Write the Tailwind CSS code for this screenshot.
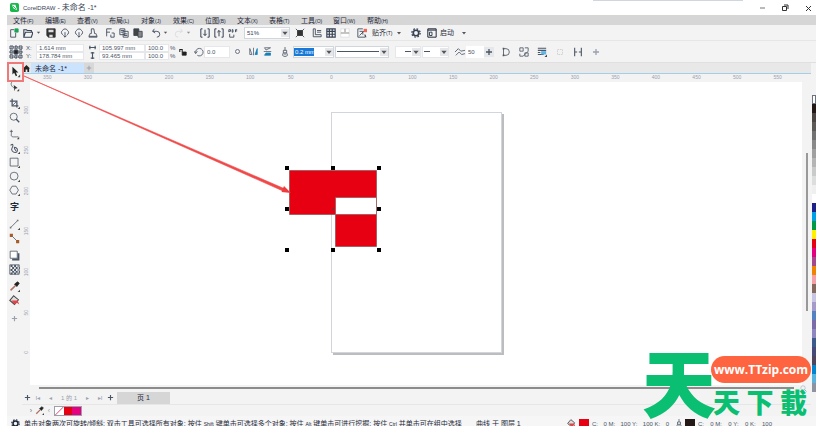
<!DOCTYPE html>
<html lang="zh-CN">
<head>
  <meta charset="UTF-8" />
  <title>CorelDRAW - 未命名 -1*</title>
  <meta name="viewport" content="width=device-width, initial-scale=1.0" />
  <script src="https://cdn.jsdelivr.net/npm/@tailwindcss/browser@4"></script>
</head>
<body class="relative h-screen overflow-hidden bg-white fill-none stroke-current pl-[7px] font-['Liberation_Sans','Noto_Sans_CJK_SC',sans-serif] text-[7px] leading-none text-gray-700">

  <!-- Icon sprite -->
  <svg class="hidden">
    <symbol id="caret" viewBox="0 0 6 6"><path d="M1 2h4L3 4.500z" fill="#555" stroke="none"/></symbol>
    <symbol id="new" viewBox="0 0 12 12"><path d="M6 2H2v9h6V6"/><path d="M7 1h4v4H7z" fill="#19a55a" stroke="#19a55a"/></symbol>
    <symbol id="open" viewBox="0 0 12 12"><path d="M1 11V2h3l1 1h5v2M1 11l2-6h9l-2 6z" stroke-width="1.300"/></symbol>
    <symbol id="save" viewBox="0 0 12 12"><path d="M1 1h10v10H3L1 9z" fill="#333" stroke="#333"/><path d="M3 2h6v3H3zM4 8h4v3H4z" fill="#ddd" stroke="none"/></symbol>
    <symbol id="cloud-up" viewBox="0 0 12 12"><path d="M3.500 8a2.800 2.800 0 0 1-.5-5 3.300 3.300 0 0 1 6 0 2.800 2.800 0 0 1-.5 5M6 11V5M4 9l2 2 2-2"/></symbol>
    <symbol id="print" viewBox="0 0 12 12"><path d="M4 7V1h3l1 6M3 6l-2 4h10L9 6M1 11h10"/></symbol>
    <symbol id="cut" viewBox="0 0 12 12"><path d="M2 10V1h6M2 5h4M8 6h3v5H7V8"/></symbol>
    <symbol id="copy" viewBox="0 0 12 12"><path d="M1 1h6v7H1zM5 4h6v7H5zM2 3h4M2 5h3M6 7h4M6 9h4"/></symbol>
    <symbol id="paste" viewBox="0 0 12 12"><path d="M1 1h6v8H1z" fill="#444"/><path d="M6 4h5v7H6z" fill="#888"/></symbol>
    <symbol id="undo" viewBox="0 0 12 12"><path d="M4 1L2 4l3 2M2 4h5a3 3 0 0 1 0 7"/></symbol>
    <symbol id="redo" viewBox="0 0 12 12"><path d="M8 1l2 3-3 2M10 4H5a3 3 0 0 0 0 7" stroke="#ccc"/></symbol>
    <symbol id="import" viewBox="0 0 12 12"><path d="M3 1H1v10h2M9 1h2v10H9M6 2v7M4 7l2 2 2-2" stroke-width="1.200"/></symbol>
    <symbol id="export" viewBox="0 0 12 12"><path d="M3 1H1v10h2M9 1h2v10H9M6 10V3M4 5l2-2 2 2" stroke-width="1.200"/></symbol>
    <symbol id="pdf" viewBox="0 0 12 12"><path d="M1 5V2h2v2H1M5 2v3h1V2zM9 5V2h2M9 3.500h2M2 7v4h5V8"/></symbol>
    <symbol id="full" viewBox="0 0 12 12"><path d="M3 3h6v6H3z" fill="#333" stroke="#333"/><path d="M1 1l3 3M11 1L8 4M1 11l3-3M11 11L8 8"/></symbol>
    <symbol id="rulers" viewBox="0 0 12 12"><path d="M1.500 1v9.500H11V8H4V1zM6 3h5M6 5h5"/></symbol>
    <symbol id="grid" viewBox="0 0 12 12"><path d="M1 1h10v10H1zM1 4h10M1 7.500h10M4 1v10M7.500 1v10" stroke-width="1.400"/></symbol>
    <symbol id="guides" viewBox="0 0 12 12"><path d="M1 1h10v10H1z" fill="#fff" stroke="#ddd"/><path d="M1 6h10M6 1v4" stroke="#777"/></symbol>
    <symbol id="snap" viewBox="0 0 12 12"><path d="M7 1H1v10h9V8M3 4h4v4M3 9l6-6M9 8l2 3"/><path d="M8 1h4v4H8z" fill="#ee6655" stroke="none"/></symbol>
    <symbol id="gear" viewBox="0 0 12 12"><circle cx="6" cy="6" r="3.300" stroke-width="2"/><circle cx="6" cy="6" r="5" stroke-width="1.500" stroke-dasharray="2 1.930"/></symbol>
    <symbol id="app" viewBox="0 0 12 12"><path d="M1 1h10v10H1zM1 2.500h10" stroke-width="1.200"/><path d="M3 5h3v4H3z"/></symbol>
    <symbol id="origin" viewBox="0 0 14 14"><path d="M2 2h10v10H2z" stroke-dasharray="1 1"/><path d="M1 1h3v3H1zM10 1h3v3h-3zM1 10h3v3H1zM10 10h3v3h-3zM6 1h2v3H6zM6 10h2v3H6zM1 6h3v2H1zM10 6h3v2h-3z"/><path d="M5 5h4v4H5z" fill="#222"/></symbol>
    <symbol id="width" viewBox="0 0 8 8"><path d="M0 4h8M1 2v4M7 2v4" stroke-width="1.300"/></symbol>
    <symbol id="height" viewBox="0 0 8 8"><path d="M4 0v8M2 1h4M2 7h4" stroke-width="1.300"/></symbol>
    <symbol id="lock" viewBox="0 0 10 10"><path d="M4 5h5v4H4z" fill="#222" stroke="#222"/><path d="M1 5V2h3v3" stroke="#222" stroke-width="1.300"/></symbol>
    <symbol id="rotate" viewBox="0 0 12 12"><path d="M2 7a4.500 4.500 0 1 1 2 3M0 5l2 3 2-3"/></symbol>
    <symbol id="flip-h" viewBox="0 0 12 12"><path d="M1 2v8h3zM6 1v10"/><path d="M11 2v8H8z" fill="#1581b8" stroke="#1581b8"/></symbol>
    <symbol id="flip-v" viewBox="0 0 12 12"><path d="M2 1h8L4 4zM1 6h10"/><path d="M4 8h6v3H2z" fill="#1581b8" stroke="#1581b8"/></symbol>
    <symbol id="pen" viewBox="0 0 8 12"><path d="M4 0v4M2 4h4v3H2zM2 7l-1 3 3 2 3-2-1-3M4 7v3"/></symbol>
    <symbol id="smooth" viewBox="0 0 12 12"><path d="M0 6l4-4 3 3 5-1M1 10l4-4 3 3 4-1"/></symbol>
    <symbol id="close-curve" viewBox="0 0 12 12"><path d="M3 2v8M3 2h3a4 4 0 0 1 0 8H3"/><path d="M2 1h2v2H2zM2 9h2v2H2z" fill="#555" stroke="none"/></symbol>
    <symbol id="bounds" viewBox="0 0 12 12"><path d="M1 1h4v4H1zM7 7h4v4H7zM7 1h4v4L5 11H1V8"/></symbol>
    <symbol id="wrap" viewBox="0 0 12 12"><path d="M1 1.500h10M1 4h10M1 6.500h3M1 9h7" stroke-width="1.300"/><path d="M5 5h6v4H5z" fill="#5ab5e8" stroke="none"/><path d="M12 9v3H9z" fill="#444" stroke="none"/></symbol>
    <symbol id="dim" viewBox="0 0 12 12"><path d="M3 3h6v6H3z" stroke="#ccc" stroke-dasharray="2 1"/></symbol>
    <symbol id="nodes" viewBox="0 0 12 12"><path d="M2 1v10M10 1v10M2 6h3M10 6H7" stroke-width="1.300"/></symbol>
    <symbol id="plus" viewBox="0 0 8 8"><path d="M4 1v6M1 4h6" stroke-width="1.300"/></symbol>
    <symbol id="home" viewBox="0 0 8 8"><path d="M4 0l4 4H7v4H5V5H3v3H1V4H0z" fill="#222" stroke="none"/></symbol>
    <!-- toolbox -->
    <symbol id="pick" viewBox="0 0 14 14"><path d="M4 1v9l2-2 2 4 1.500-1L8 7.500h3z" fill="#222" stroke="none"/><path d="M13 10v3h-3z" fill="#444" stroke="none"/></symbol>
    <symbol id="shape" viewBox="0 0 14 14"><path d="M4 1c-3 3 0 7 3 8"/><path d="M6 5l5 4-3 1-1 3z" fill="#333" stroke="none"/><path d="M13 10v3h-3z" fill="#444" stroke="none"/></symbol>
    <symbol id="crop" viewBox="0 0 14 14"><path d="M4 1v9h8M1 4h9v8" stroke-width="1.600"/><path d="M5 9l4-4"/><path d="M14 11v3h-3z" fill="#444" stroke="none"/></symbol>
    <symbol id="zoom" viewBox="0 0 14 14"><circle cx="6" cy="6" r="4.500"/><path d="M9 9l4 4" stroke-width="1.700"/></symbol>
    <symbol id="freehand" viewBox="0 0 14 14"><path d="M3 1v5M1 3h4M3 6c-1 5 2 4 9 4"/><path d="M13 10v3h-3z" fill="#444" stroke="none"/></symbol>
    <symbol id="curve" viewBox="0 0 14 14"><path d="M2 3c3-3 4 0 2 3s1 6 4 6 4-4 1-6-3 1 0 4" stroke-width="1.300"/><path d="M14 11v3h-3z" fill="#444" stroke="none"/></symbol>
    <symbol id="rect" viewBox="0 0 14 14"><path d="M1.500 1.500h10v10h-10z"/><path d="M14 11v3h-3z" fill="#444" stroke="none"/></symbol>
    <symbol id="ellipse" viewBox="0 0 14 14"><circle cx="6.500" cy="6.500" r="5"/><path d="M14 11v3h-3z" fill="#444" stroke="none"/></symbol>
    <symbol id="polygon" viewBox="0 0 14 14"><path d="M4 1.500h5l3 5-3 5H4l-3-5z"/><path d="M14 11v3h-3z" fill="#444" stroke="none"/></symbol>
    <symbol id="line" viewBox="0 0 14 14"><path d="M2 11l9-9"/><path d="M1 10h2v2H1zM10 1h2v2h-2z" fill="#777" stroke="none"/><path d="M14 11v3h-3z" fill="#444" stroke="none"/></symbol>
    <symbol id="connector" viewBox="0 0 14 14"><path d="M3 3l8 8"/><path d="M1 1h4v4H1zM9 9h4v4H9z" fill="#a85a28" stroke="none"/></symbol>
    <symbol id="shadow" viewBox="0 0 14 14"><path d="M4 12h8V4" stroke-width="2.500"/><path d="M1.500 1.500h9v9h-9z" fill="#fff"/></symbol>
    <symbol id="checker" viewBox="0 0 14 14"><path d="M1 1h12v12H1z"/><path d="M2 2.500h10M2 7.500h10M2 12h10" stroke-width="2.500" stroke-dasharray="2.500 2"/><path d="M4 5h10M4 10h10" stroke-width="2.500" stroke-dasharray="2.500 2"/></symbol>
    <symbol id="dropper" viewBox="0 0 14 14"><path d="M2 12l6-6" stroke="#b07060" stroke-width="2"/><path d="M7 4l3 3 3-4-2-2z" fill="#222" stroke="#222"/><path d="M14 11v3h-3z" fill="#444" stroke="none"/></symbol>
    <symbol id="bucket" viewBox="0 0 14 14"><path d="M6 1l6 5-5 6-6-5z" fill="#ddd" stroke="#444" stroke-width="1.300"/><path d="M3 7h8l2 5-3-2-3 2z" fill="#e0454a" stroke="none"/></symbol>
  </svg>

  <!-- Title bar -->
  <header class="relative flex h-[15px] items-center bg-white pr-[3px] pl-[3px]">
    <svg class="size-[9px] stroke-none" viewBox="0 0 10 10"><rect width="10" height="10" rx="2" fill="#19b84c"/><path d="M2 2l4 0 2 6-4-2z" fill="#fff"/><path d="M3 3l4 4" stroke="#19b84c"/></svg>
    <h1 class="ml-1 text-[7px]"><span class="text-[6px]">CorelDRAW</span> - <span class="text-[8px]">未命名</span> -1*</h1>
    <div class="ml-auto flex gap-[13px] text-gray-800">
      <button aria-label="最小化"><svg class="size-[10px]" viewBox="0 0 10 10"><path d="M3 5h5" stroke="#777"/></svg></button>
      <button aria-label="还原"><svg class="size-[10px]" viewBox="0 0 10 10"><path d="M2.500 3.500h4v4h-4zM4 2h4v4" stroke="#333"/></svg></button>
      <button aria-label="关闭"><svg class="size-[10px]" viewBox="0 0 10 10"><path d="M3 3l5 5M8 3L3 8" stroke="#333"/></svg></button>
    </div>
    <div class="absolute top-0 right-[73px] h-px w-[150px] bg-gray-300"></div>
  </header>

  <!-- Menu bar -->
  <nav class="flex h-[10px] items-center bg-[#d6d6d6] pl-[6px] text-gray-800">
    <button class="w-8 text-left">文件<span class="text-[5px]">(F)</span></button>
    <button class="w-8 text-left">编辑<span class="text-[5px]">(E)</span></button>
    <button class="w-8 text-left">查看<span class="text-[5px]">(V)</span></button>
    <button class="w-8 text-left">布局<span class="text-[5px]">(L)</span></button>
    <button class="w-8 text-left">对象<span class="text-[5px]">(J)</span></button>
    <button class="w-8 text-left">效果<span class="text-[5px]">(C)</span></button>
    <button class="w-8 text-left">位图<span class="text-[5px]">(B)</span></button>
    <button class="w-8 text-left">文本<span class="text-[5px]">(X)</span></button>
    <button class="w-8 text-left">表格<span class="text-[5px]">(T)</span></button>
    <button class="w-8 text-left">工具<span class="text-[5px]">(O)</span></button>
    <button class="w-[34px] text-left">窗口<span class="text-[5px]">(W)</span></button>
    <button class="w-8 text-left">帮助<span class="text-[5px]">(H)</span></button>
  </nav>

  <!-- Standard toolbar -->
  <div class="flex h-4 items-center gap-[3px] border-b border-[#e6e6e6] bg-[#f3f3f3]">
    <div class="flex items-center">
      <button class="flex w-[14px] justify-center" aria-label="新建"><svg class="size-[10px]"><use href="#new"/></svg></button>
      <button class="flex w-[23px] items-center gap-[3px] pl-[2px]" aria-label="打开"><svg class="size-[10px]"><use href="#open"/></svg><svg class="size-[5px]"><use href="#caret"/></svg></button>
      <button class="flex w-[14px] justify-center" aria-label="保存"><svg class="size-[10px]"><use href="#save"/></svg></button>
      <button class="flex w-[14px] justify-center" aria-label="从云打开"><svg class="size-[10px]"><use href="#cloud-up"/></svg></button>
      <button class="flex w-[14px] justify-center" aria-label="保存到云"><svg class="size-[10px]"><use href="#cloud-up"/></svg></button>
      <button class="flex w-[14px] justify-center" aria-label="打印"><svg class="size-[10px]"><use href="#print"/></svg></button>
    </div>
    <div class="flex items-center">
      <button class="flex w-[14px] justify-center" aria-label="剪切"><svg class="size-[10px]"><use href="#cut"/></svg></button>
      <button class="flex w-[14px] justify-center" aria-label="复制"><svg class="size-[10px]"><use href="#copy"/></svg></button>
      <button class="flex w-[14px] justify-center" aria-label="粘贴"><svg class="size-[10px]"><use href="#paste"/></svg></button>
    </div>
    <div class="flex items-center pl-px">
      <button class="flex w-[23px] items-center gap-[2px] pl-[2px]" aria-label="撤销"><svg class="size-[10px]"><use href="#undo"/></svg><svg class="size-[5px]"><use href="#caret"/></svg></button>
      <button class="flex w-[23px] items-center gap-[2px] pl-[2px] opacity-60" aria-label="重做"><svg class="size-[10px]"><use href="#redo"/></svg><svg class="size-[5px]"><use href="#caret"/></svg></button>
    </div>
    <div class="flex items-center">
      <button class="flex w-[14px] justify-center" aria-label="导入"><svg class="size-[10px]"><use href="#import"/></svg></button>
      <button class="flex w-[14px] justify-center" aria-label="导出"><svg class="size-[10px]"><use href="#export"/></svg></button>
      <button class="flex w-[14px] justify-center" aria-label="发布为 PDF"><svg class="size-[10px]"><use href="#pdf"/></svg></button>
    </div>
    <div class="relative ml-px flex items-center">
      <select class="h-3 w-[46px] appearance-none border border-gray-300 bg-white pl-[2px] text-[6px]" aria-label="缩放级别"><option>51%</option></select>
      <svg class="absolute right-px size-[8px] bg-gray-200"><use href="#caret"/></svg>
    </div>
    <button class="flex w-[14px] justify-center" aria-label="全屏预览"><svg class="size-[10px]"><use href="#full"/></svg></button>
    <div class="flex items-center">
      <button class="flex w-[14px] justify-center" aria-label="标尺"><svg class="size-[10px]"><use href="#rulers"/></svg></button>
      <button class="flex w-[14px] justify-center" aria-label="网格"><svg class="size-[10px]"><use href="#grid"/></svg></button>
      <button class="flex w-[14px] justify-center" aria-label="辅助线"><svg class="size-[10px]"><use href="#guides"/></svg></button>
    </div>
    <button class="flex w-[14px] justify-center" aria-label="贴齐关闭"><svg class="size-[10px]"><use href="#snap"/></svg></button>
    <button class="flex w-[34px] items-center gap-1 text-gray-800"><span>贴齐<span class="text-[5px]">(T)</span></span><svg class="size-[6px]"><use href="#caret"/></svg></button>
    <button class="flex w-[14px] justify-center" aria-label="选项"><svg class="size-[10px]"><use href="#gear"/></svg></button>
    <button class="flex items-center gap-[3px] pl-px text-gray-800"><svg class="size-[10px]"><use href="#app"/></svg>启动<svg class="ml-1 size-[6px]"><use href="#caret"/></svg></button>
  </div>

  <!-- Property bar -->
  <div class="flex h-[22px] items-center border-b border-[#e0e0e0] bg-[#f3f3f3] text-[6px] text-gray-600">
    <button class="ml-[2px]" aria-label="对象原点"><svg class="size-[14px]"><use href="#origin"/></svg></button>
    <div class="ml-[3px] grid grid-cols-[10px_48px] items-center">
      <label for="posX">X:</label><input id="posX" value="1.614 mm" class="h-[8px] border border-gray-200 bg-white pl-[2px]" />
      <label for="posY">Y:</label><input id="posY" value="178.784 mm" class="h-[8px] border border-gray-200 bg-white pl-[2px]" />
    </div>
    <div class="ml-[5px] grid grid-cols-[10px_46px_24px_8px] items-center">
      <label for="objW"><svg class="size-[7px]"><use href="#width"/></svg></label><input id="objW" value="105.997 mm" class="h-[8px] border border-gray-200 bg-white pl-[2px]" />
      <input id="scaleX" aria-label="水平缩放" value="100.0" class="h-[8px] border border-gray-200 bg-white pl-[2px]" /><label for="scaleX" class="pl-px">%</label>
      <label for="objH"><svg class="size-[7px]"><use href="#height"/></svg></label><input id="objH" value="93.465 mm" class="h-[8px] border border-gray-200 bg-white pl-[2px]" />
      <input id="scaleY" aria-label="垂直缩放" value="100.0" class="h-[8px] border border-gray-200 bg-white pl-[2px]" /><label for="scaleY" class="pl-px">%</label>
    </div>
    <button class="ml-[2px]" aria-label="锁定比率"><svg class="size-[8px]"><use href="#lock"/></svg></button>
    <label for="angle" class="ml-[7px]"><svg class="size-[10px]"><use href="#rotate"/></svg></label>
    <input id="angle" aria-label="旋转角度" value="0.0" class="h-3 w-[26px] border border-gray-200 bg-white pl-[2px]" />
    <span class="ml-[5px] size-[5px] rounded-full border border-gray-500"></span>
    <button class="ml-[9px]" aria-label="水平镜像"><svg class="size-[9px]"><use href="#flip-h"/></svg></button>
    <button class="ml-[5px]" aria-label="垂直镜像"><svg class="size-[9px]"><use href="#flip-v"/></svg></button>
    <svg class="ml-[9px] h-[10px] w-[8px]"><use href="#pen"/></svg>
    <div class="relative ml-1 flex items-center">
      <select class="h-3 w-[41px] appearance-none border border-gray-300 bg-white bg-linear-to-r from-[#1a78d6] from-50% to-white to-50% bg-[length:40px_8px] bg-left bg-no-repeat pl-px text-white" aria-label="轮廓宽度"><option>0.2 mm</option></select>
      <svg class="absolute right-px size-[8px] bg-gray-200"><use href="#caret"/></svg>
    </div>
    <div class="relative ml-px flex items-center">
      <select class="h-3 w-[54px] appearance-none border border-gray-300 bg-white" aria-label="线条样式"></select>
      <span class="absolute left-[2px] h-px w-[42px] bg-gray-600"></span>
      <svg class="absolute right-px size-[8px] bg-gray-200"><use href="#caret"/></svg>
    </div>
    <div class="relative ml-[6px] flex items-center">
      <select class="h-3 w-[26px] appearance-none border border-gray-200 bg-white" aria-label="起始箭头"></select>
      <span class="absolute left-[10px] h-px w-[6px] bg-gray-600"></span>
      <svg class="absolute right-px size-[8px] bg-gray-200"><use href="#caret"/></svg>
    </div>
    <div class="relative ml-px flex items-center">
      <select class="h-3 w-[27px] appearance-none border border-gray-200 bg-white" aria-label="终止箭头"></select>
      <span class="absolute left-[2px] h-px w-[6px] bg-gray-600"></span>
      <svg class="absolute right-px size-[8px] bg-gray-200"><use href="#caret"/></svg>
    </div>
    <label for="smoothing" class="ml-[6px]"><svg class="size-[10px]"><use href="#smooth"/></svg></label>
    <input id="smoothing" aria-label="手绘平滑" value="50" class="ml-px h-3 w-[18px] bg-white pl-[2px]" />
    <button class="bg-gray-200 p-px" aria-label="增加"><svg class="size-[8px]"><use href="#plus"/></svg></button>
    <div class="ml-[7px] flex items-center gap-2">
      <button aria-label="闭合曲线"><svg class="size-[10px]"><use href="#close-curve"/></svg></button>
      <button aria-label="边界框"><svg class="size-[10px]"><use href="#bounds"/></svg></button>
      <button aria-label="文本换行"><svg class="size-[10px]"><use href="#wrap"/></svg></button>
      <button aria-label="对齐"><svg class="size-[10px]"><use href="#dim"/></svg></button>
      <button aria-label="节点"><svg class="size-[10px]"><use href="#nodes"/></svg></button>
      <button class="pl-px text-gray-400" aria-label="自定义"><svg class="size-[8px]"><use href="#plus"/></svg></button>
    </div>
  </div>

  <div class="flex h-[353px] bg-[#f3f3f3]">
    <!-- Toolbox -->
    <aside class="relative flex w-[15px] flex-col items-center gap-[3px] pt-[3px] text-gray-600">
      <button class="flex size-[12px] items-center justify-center" aria-label="选择"><svg class="size-[12px]"><use href="#pick"/></svg></button>
      <button aria-label="形状"><svg class="size-[11px]"><use href="#shape"/></svg></button>
      <button class="mt-[3px]" aria-label="裁剪"><svg class="size-[11px]"><use href="#crop"/></svg></button>
      <button aria-label="缩放"><svg class="size-[11px]"><use href="#zoom"/></svg></button>
      <button class="mt-[3px]" aria-label="手绘"><svg class="size-[11px]"><use href="#freehand"/></svg></button>
      <button aria-label="艺术笔"><svg class="size-[11px]"><use href="#curve"/></svg></button>
      <button aria-label="矩形"><svg class="size-[11px]"><use href="#rect"/></svg></button>
      <button aria-label="椭圆"><svg class="size-[11px]"><use href="#ellipse"/></svg></button>
      <button aria-label="多边形"><svg class="size-[11px]"><use href="#polygon"/></svg></button>
      <button class="mt-[3px] h-[11px] text-[9px] leading-[11px] font-bold text-gray-800">字</button>
      <button class="mt-[3px]" aria-label="线段"><svg class="size-[11px]"><use href="#line"/></svg></button>
      <button aria-label="连接器"><svg class="size-[11px]"><use href="#connector"/></svg></button>
      <button class="mt-[3px]" aria-label="阴影"><svg class="size-[11px]"><use href="#shadow"/></svg></button>
      <button aria-label="透明度"><svg class="size-[11px]"><use href="#checker"/></svg></button>
      <button class="mt-[3px]" aria-label="颜色滴管"><svg class="size-[11px]"><use href="#dropper"/></svg></button>
      <button aria-label="交互式填充"><svg class="size-[11px]"><use href="#bucket"/></svg></button>
      <button class="mt-[6px] text-gray-400" aria-label="自定义工具箱"><svg class="size-[7px]"><use href="#plus"/></svg></button>
      <span class="absolute -top-px left-0 h-[20px] w-[17px] border-2 border-[#ef7878]"></span>
    </aside>

    <div class="flex min-w-0 flex-1 flex-col">
      <!-- Document tabs -->
      <div class="flex h-[11px] items-center border-b border-[#a5cfe6] bg-[#e8e8e8]">
        <button class="flex w-[9px] justify-center" aria-label="欢迎屏幕"><svg class="size-[7px]"><use href="#home"/></svg></button>
        <button class="h-full w-[53px] bg-[#cbe3fd] pl-1 text-left text-gray-800">未命名 -1*</button>
        <button class="flex h-full w-[10px] items-center justify-center bg-[#d8d8d8] text-gray-400" aria-label="新建文档"><svg class="size-[6px]"><use href="#plus"/></svg></button>
      </div>

      <!-- Horizontal ruler -->
      <div class="flex h-[8px] pr-[13px] pl-[5px] text-center text-[5px] leading-[7px] text-gray-400">
        <span class="flex-1">350</span><span class="flex-1">300</span><span class="flex-1">250</span><span class="flex-1">200</span><span class="flex-1">150</span><span class="flex-1">100</span><span class="flex-1">50</span><span class="flex-1">0</span><span class="flex-1">50</span><span class="flex-1">100</span><span class="flex-1">150</span><span class="flex-1">200</span><span class="flex-1">250</span><span class="flex-1">300</span><span class="flex-1">350</span><span class="flex-1">400</span><span class="flex-1">450</span><span class="flex-1">500</span><span class="flex-1">550</span>
      </div>

      <div class="flex min-h-0 flex-1">
        <!-- Vertical ruler -->
        <div class="flex w-[8px] flex-col pt-2 pb-3 text-[5px] text-gray-400">
          <span class="flex flex-1 items-center justify-center [writing-mode:sideways-lr]">300</span><span class="flex flex-1 items-center justify-center [writing-mode:sideways-lr]">250</span><span class="flex flex-1 items-center justify-center [writing-mode:sideways-lr]">200</span><span class="flex flex-1 items-center justify-center [writing-mode:sideways-lr]">150</span><span class="flex flex-1 items-center justify-center [writing-mode:sideways-lr]">100</span><span class="flex flex-1 items-center justify-center [writing-mode:sideways-lr]">50</span><span class="flex flex-1 items-center justify-center [writing-mode:sideways-lr]">0</span>
        </div>

        <!-- Drawing canvas -->
        <main class="relative flex-1 overflow-hidden bg-white">
          <div class="absolute top-[30px] left-[301px] h-[241px] w-[171px] border border-gray-300 shadow-[2px_2px_0_#bdbdbd]"></div>
          <svg class="absolute top-[83px] left-[254px] h-[90px] w-[98px] stroke-none" viewBox="284 165 98 90">
            <path d="M289.500 170.500h87v76h-41v-32h-46z" fill="#e60012" stroke="#8c5050" stroke-width=".7"/>
            <path d="M335.500 197.500h41v17h-41z" fill="#fff" stroke="#8c5050" stroke-width=".7"/>
            <g fill="#000">
              <path d="M285 166h4v4h-4zM331 166h4v4h-4zM377 166h4v4h-4z"/>
              <path d="M285 207h4v4h-4zM377 207h4v4h-4z"/>
              <path d="M285 248h4v4h-4zM331 248h4v4h-4zM377 248h4v4h-4z"/>
            </g>
            <path d="M332 208l2 2M334 208l-2 2" stroke="#444" stroke-width=".6"/>
          </svg>
        </main>

        <!-- Vertical scrollbar -->
        <div class="w-[9px] pt-[71px] pl-[4px]"><div class="h-[158px] w-[2px] bg-[#999]"></div></div>
      </div>

      <!-- Horizontal scrollbar -->
      <div class="flex h-[6px] items-center pr-[4px] pl-[17px]">
        <div class="h-[2px] flex-1 bg-[#8c8c8c]"></div>
        <svg class="ml-[6px] size-[7px] text-gray-400"><use href="#zoom"/></svg>
      </div>

      <!-- Page tabs -->
      <div class="flex h-[14px] items-center border-b border-[#e6e6e6] pl-[2px] text-gray-600">
        <button aria-label="添加页"><svg class="size-[7px]"><use href="#plus"/></svg></button>
        <div class="flex w-[76px] items-center justify-around text-[6px] text-gray-400">
          <button>I◂</button><button>◂</button><span>1 的 1</span><button>▸</button><button>▸I</button>
        </div>
        <button aria-label="在后面添加页"><svg class="size-[7px]"><use href="#plus"/></svg></button>
        <button class="ml-[3px] h-3 w-[53px] bg-[#d6d6d6] text-gray-800">页 1</button>
      </div>

      <!-- Document palette -->
      <div class="flex h-[11px] items-center pl-[5px] text-gray-500">
        <button class="w-[8px]">›</button>
        <button aria-label="滴管"><svg class="size-[9px]"><use href="#dropper"/></svg></button>
        <button class="w-[10px] text-gray-400">‹</button>
        <div class="flex h-[10px] w-[28px] border border-gray-400">
          <button class="flex-1 bg-white" aria-label="无填充"><svg class="size-full" viewBox="0 0 8 8"><path d="M0 8L8 0" stroke="#e05060"/></svg></button>
          <button class="flex-1 bg-[#e60012]" aria-label="红"></button>
          <button class="flex-1 bg-[#e4007f]" aria-label="品红"></button>
        </div>
      </div>
    </div>

    <!-- Colour palette -->
    <aside class="flex w-[5px] flex-col pt-[32px] pl-px">
      <span class="h-[9px] border border-gray-500 bg-white"></span>
      <span class="h-[9px] bg-[#231815]"></span><span class="h-[9px] bg-[#4a4442]"></span><span class="h-[9px] bg-[#5d5957]"></span><span class="h-[9px] bg-[#727171]"></span><span class="h-[9px] bg-[#898989]"></span><span class="h-[9px] bg-[#9fa0a0]"></span><span class="h-[9px] bg-[#b5b5b6]"></span><span class="h-[9px] bg-[#c9caca]"></span><span class="h-[9px] bg-[#dcdddd]"></span><span class="h-[9px] bg-[#efefef]"></span><span class="h-[9px] bg-white"></span>
      <span class="h-[9px] bg-[#1d2088]"></span><span class="h-[9px] bg-[#00a0e9]"></span><span class="h-[9px] bg-[#009944]"></span><span class="h-[9px] bg-[#fff100]"></span><span class="h-[9px] bg-[#e60012]"></span><span class="h-[9px] bg-[#e4007f]"></span><span class="h-[9px] bg-[#a3488c]"></span><span class="h-[9px] bg-[#f08300]"></span><span class="h-[9px] bg-[#f5a0a8]"></span><span class="h-[9px] bg-[#84695c]"></span><span class="h-[9px] bg-[#c7c5e3]"></span><span class="h-[9px] bg-[#a59aca]"></span><span class="h-[9px] bg-[#5383c3]"></span><span class="h-[9px] bg-[#7b6bab]"></span><span class="h-[9px] bg-[#8e86c0]"></span><span class="h-[9px] bg-[#3d5a8c]"></span><span class="h-[9px] bg-[#454a78]"></span><span class="h-[9px] bg-[#4f455c]"></span><span class="h-[9px] bg-[#0086d1]"></span><span class="h-[9px] bg-[#55b5e0]"></span><span class="h-[9px] bg-[#8d93a0]"></span>
    </aside>
  </div>

  <!-- Status bar -->
  <footer class="flex h-[12px] items-center bg-[#f6f6f6] pt-[3px] pl-1 whitespace-nowrap text-gray-800">
    <svg class="size-[9px] shrink-0"><use href="#gear"/></svg>
    <p class="ml-1 w-[452px] shrink-0">单击对象两次可旋转/倾斜; 双击工具可选择所有对象; 按住 <span class="text-[5px]">Shift</span> 键单击可选择多个对象; 按住 <span class="text-[5px]">Alt</span> 键单击可进行挖掘; 按住 <span class="text-[5px]">Ctrl</span> 并单击可在组中选择</p>
    <p>曲线 于 图层 1</p>
    <div class="ml-auto flex items-center gap-[3px] pr-[44px] text-[6px] text-gray-600">
      <svg class="size-[9px]"><use href="#bucket"/></svg>
      <span class="size-[10px] bg-[#e60012]"></span>
      <span class="flex w-[81px] justify-between pr-1"><span>C:</span><span>0 M:</span><span>100 Y:</span><span>100 K:</span><span>0</span></span>
      <svg class="h-[9px] w-[6px]"><use href="#pen"/></svg>
      <span class="size-[10px] bg-[#231815]"></span>
      <span class="flex w-[74px] justify-between"><span>C:</span><span>0 M:</span><span>0 Y:</span><span>0 K:</span><span>100</span></span>
    </div>
  </footer>

  <!-- Callout arrow from the pick tool to the shape -->
  <svg class="pointer-events-none absolute top-[72px] left-[22px] h-[124px] w-[270px] stroke-none" viewBox="22 72 270 124">
    <path d="M24 76L284 188.500L283 191z" fill="#f04848" stroke="#f04848" stroke-width=".6"/>
    <path d="M291 193l-7-7-2.500 6z" fill="#ee3c3c"/>
  </svg>

  <!-- Site mark -->
  <div class="absolute right-[5px] bottom-0 flex h-[78px] items-start font-['Noto_Sans_CJK_TC',sans-serif] font-black text-[#0abf72]">
    <span class="text-[74px] leading-[64px]">天</span>
    <div class="-ml-[5px] flex flex-col">
      <a href="#" class="mt-[8px] flex h-[27px] w-[100px] items-center justify-center rounded-full bg-[#ff6440] font-['Open_Sans',sans-serif] text-[12px] font-bold text-white">www.TTzip.com</a>
      <span class="flex justify-between pt-[5px] pr-[4px] pl-[2px] text-[27px] leading-[28px]"><span>天</span><span>下</span><span>載</span></span>
    </div>
  </div>
</body>
</html>
